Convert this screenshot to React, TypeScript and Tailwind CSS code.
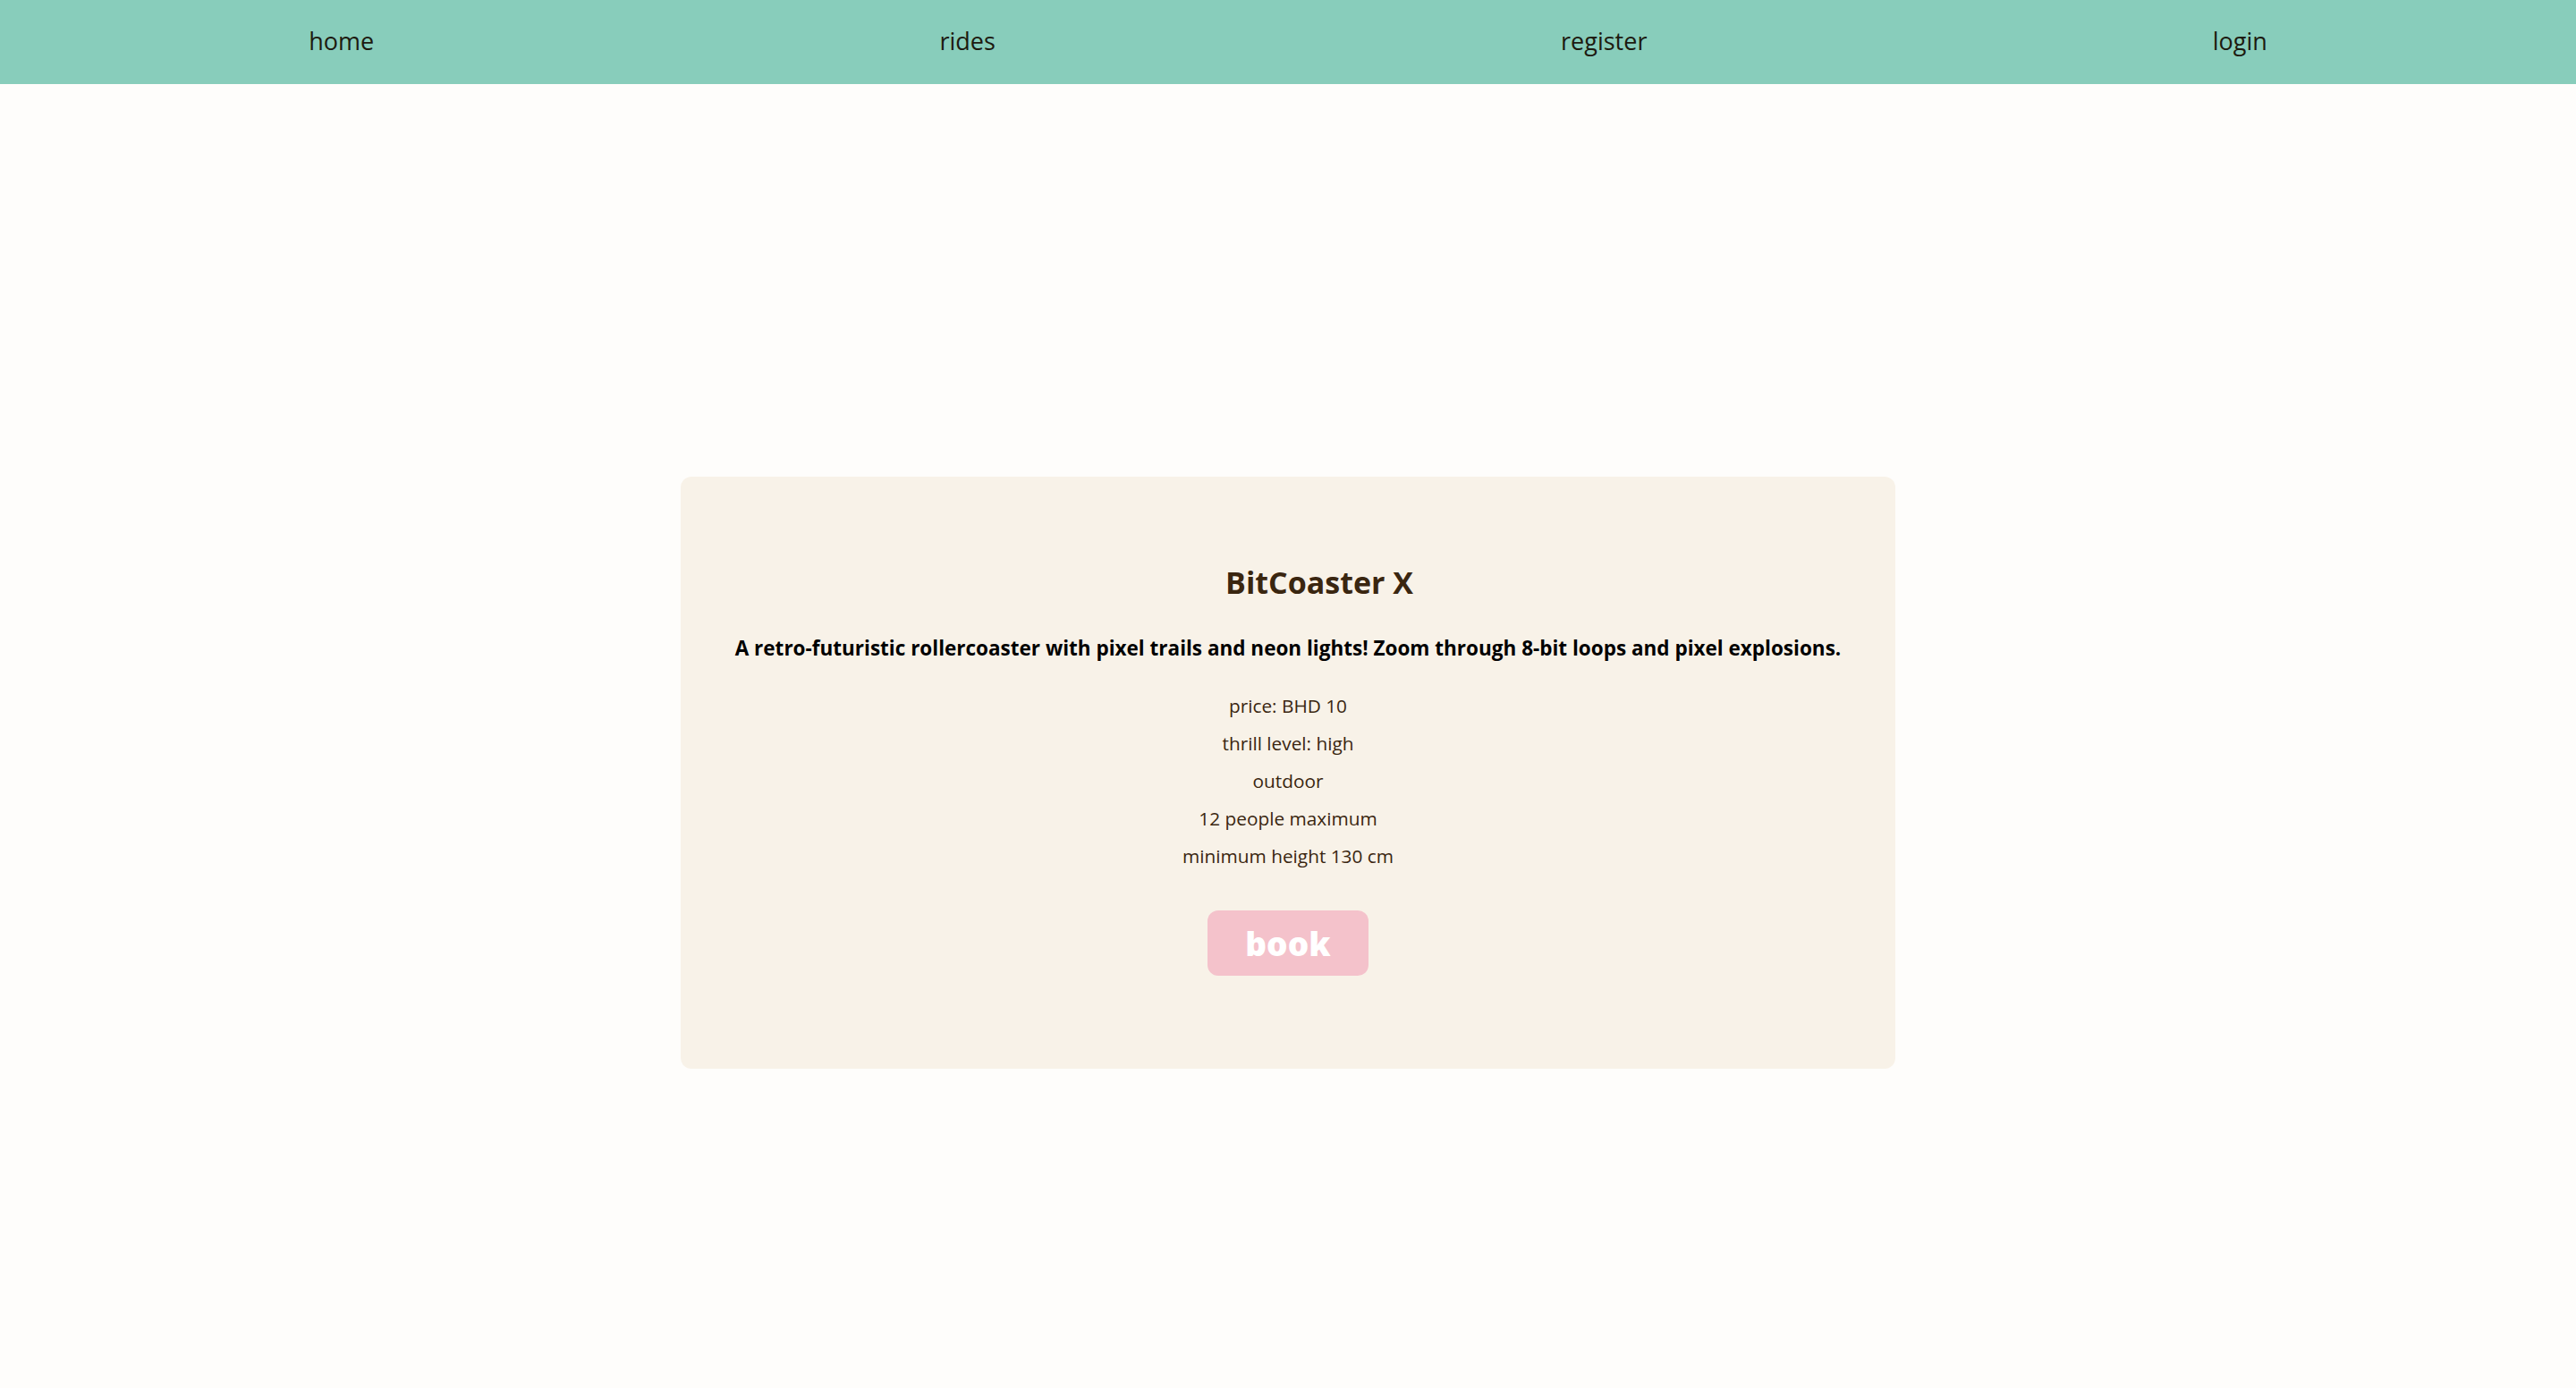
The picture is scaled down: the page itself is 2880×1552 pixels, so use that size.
import React from "react";

export default function App() {
  const details = [
    "price: BHD 10",
    "thrill level: high",
    "outdoor",
    "12 people maximum",
    "minimum height 130 cm",
  ];
  return (
    <div
      className="min-h-screen w-full bg-[#fefdfb]"
      style={{ fontFamily: "'Open Sans', Lato, sans-serif" }}
    >
      <nav className="flex h-[94px] w-full items-center justify-around bg-[#88cdbb] px-[29px] pb-[2px]">
        {["home", "rides", "register", "login"].map((t) => (
          <a key={t} className="text-[27px] leading-[34px] text-[#1d1a10]">
            {t}
          </a>
        ))}
      </nav>
      <main className="flex justify-center pt-[439px] pb-[200px]">
        <div className="flex w-[1358px] flex-col items-center rounded-[12px] bg-[#f8f2e8] pt-[98px] pb-[104px]">
          <h2 className="pl-[70px] text-[34px] font-bold leading-[40px] text-[#3a2610]">
            BitCoaster X
          </h2>
          <p className="mt-[40px] text-[22.5px] font-bold leading-[28px] text-black">
            A retro-futuristic rollercoaster with pixel trails and neon lights! Zoom through 8-bit loops and pixel explosions.
          </p>
          <div className="mt-[29px] flex flex-col items-center">
            {details.map((d) => (
              <p key={d} className="text-[20.8px] leading-[42px] text-[#3a2610]">
                {d}
              </p>
            ))}
          </div>
          <button className="mt-[40px] flex h-[73px] w-[180px] items-center justify-center rounded-[12px] bg-[#f4c2cb] text-[37px] font-extrabold leading-none text-white">
            book
          </button>
        </div>
      </main>
    </div>
  );
}
